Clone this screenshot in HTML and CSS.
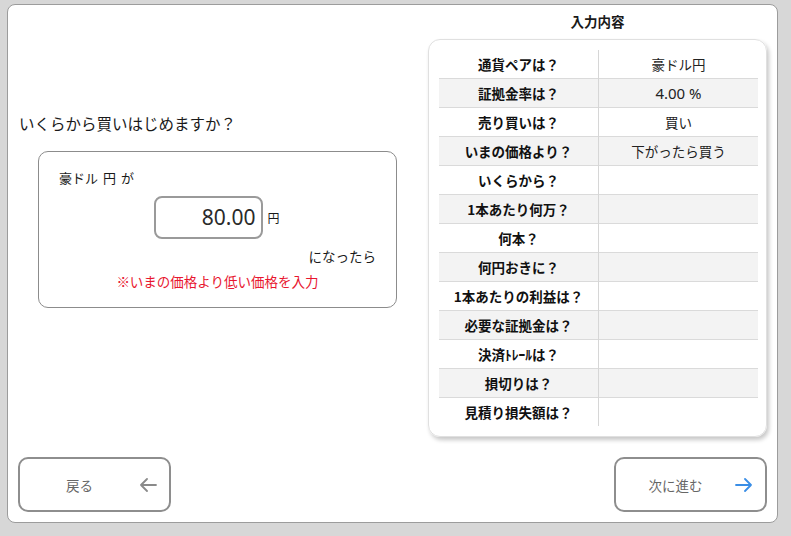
FILE: index.html
```html
<!DOCTYPE html>
<html lang="ja">
<head>
<meta charset="utf-8">
<link rel="stylesheet" href="styles.css">
</head>
<body>
<div class="panel">
  <div class="main">
    <div class="left">
      <p class="question">いくらから買いはじめますか？</p>
      <div class="entry">
        <div class="pair"><span class="w">豪ドル</span><span class="w">円</span><span>が</span></div>
        <div class="price-row">
          <div class="price-input">80.00</div>
          <span class="unit">円</span>
        </div>
        <div class="then">になったら</div>
        <div class="note">※いまの価格より低い価格を入力</div>
      </div>
    </div>
    <div class="right">
      <div class="summary-title">入力内容</div>
      <div class="card">
        <table class="summary">
          <tr><th>通貨ペアは？</th><td>豪ドル円</td></tr>
          <tr><th>証拠金率は？</th><td class="num">4.00 %</td></tr>
          <tr><th>売り買いは？</th><td>買い</td></tr>
          <tr><th>いまの価格より？</th><td>下がったら買う</td></tr>
          <tr><th>いくらから？</th><td></td></tr>
          <tr><th>1本あたり何万？</th><td></td></tr>
          <tr><th>何本？</th><td></td></tr>
          <tr><th>何円おきに？</th><td></td></tr>
          <tr><th>1本あたりの利益は？</th><td></td></tr>
          <tr><th>必要な証拠金は？</th><td></td></tr>
          <tr><th>決済ﾄﾚｰﾙは？</th><td></td></tr>
          <tr><th>損切りは？</th><td></td></tr>
          <tr><th>見積り損失額は？</th><td></td></tr>
        </table>
      </div>
    </div>
  </div>
  <div class="actions">
    <button class="nav-btn">
      <span class="label">戻る</span>
      <svg class="arrow" width="18" height="14" viewBox="0 0 18 14"><path d="M17 7H2M8 1L2 7l6 6" fill="none" stroke="#8a8a8a" stroke-width="1.8" stroke-linecap="round" stroke-linejoin="round"/></svg>
    </button>
    <button class="nav-btn">
      <span class="label">次に進む</span>
      <svg class="arrow" width="18" height="14" viewBox="0 0 18 14"><path d="M1 7h15M10 1l6 6-6 6" fill="none" stroke="#3a8ee6" stroke-width="1.8" stroke-linecap="round" stroke-linejoin="round"/></svg>
    </button>
  </div>
</div>
</body>
</html>
```
FILE: styles.css
```css
html, body {
  margin: 0;
  padding: 0;
}
body {
  background: #d7d7d7;
  width: 791px;
  height: 536px;
  font-family: "Noto Sans CJK JP", "Noto Sans", sans-serif;
  color: #1a1a1a;
  padding: 4px 0 0 7px;
  box-sizing: border-box;
}
.panel {
  width: 771px;
  height: 519px;
  box-sizing: border-box;
  background: #fff;
  border: 1px solid #9c9c9c;
  border-radius: 8px;
  display: flex;
  flex-direction: column;
}
.main {
  flex: 1;
  display: flex;
  justify-content: space-between;
}
.left {
  padding-left: 11px;
  padding-top: 108px;
}
.question {
  margin: 0;
  font-size: 15.5px;
  line-height: 20px;
  height: 20px;
}
.entry {
  margin: 18px 0 0 19px;
  width: 359px;
  height: 157px;
  box-sizing: border-box;
  border: 1px solid #8c8c8c;
  border-radius: 10px;
  padding: 16px 20px 0 20px;
}
.pair {
  font-size: 13px;
  line-height: 20px;
  height: 20px;
}
.pair .w {
  margin-right: 5px;
}
.price-row {
  margin-top: 8px;
  display: flex;
  align-items: center;
  justify-content: center;
  gap: 5px;
}
.price-input {
  width: 109px;
  height: 43px;
  box-sizing: border-box;
  border: 2px solid #9a9a9a;
  border-radius: 8px;
  font-family: "Noto Sans", sans-serif;
  font-size: 21px;
  line-height: 39px;
  text-align: right;
  padding-right: 5px;
  color: #2a2a2a;
}
.unit {
  font-size: 12px;
  width: 14px;
}
.then {
  margin-top: 7px;
  text-align: right;
  font-size: 13.5px;
  line-height: 20px;
  height: 20px;
}
.note {
  margin-top: 5px;
  text-align: center;
  color: #e8162f;
  font-size: 13.5px;
  line-height: 20px;
  height: 20px;
}
.right {
  width: 339px;
  margin-right: 10px;
  padding-top: 6px;
}
.summary-title {
  text-align: center;
  font-weight: bold;
  font-size: 13.5px;
  line-height: 20px;
  height: 20px;
}
.card {
  margin-top: 8px;
  box-sizing: border-box;
  border: 1px solid #e0e0e0;
  border-radius: 12px;
  box-shadow: 2px 3px 4px rgba(0, 0, 0, 0.22);
  padding: 10px 9px 10px 10px;
}
.summary {
  width: 318px;
  border-collapse: collapse;
  table-layout: fixed;
}
.summary tr {
  border-bottom: 1px solid #dadada;
}
.summary tr:last-child {
  border-bottom: none;
}
.summary tr:nth-child(even) {
  background: #f3f3f3;
}
.summary th,
.summary td {
  height: 28px;
  padding: 0;
  text-align: center;
  font-size: 13.5px;
  line-height: 18px;
  width: 159px;
}
.summary th {
  font-weight: bold;
  color: #111;
}
.summary td {
  border-left: 1px solid #d6d6d6;
  color: #222;
}
.summary td.num {
  font-family: "Noto Sans", sans-serif;
  font-size: 15px;
}
.actions {
  display: flex;
  justify-content: space-between;
  padding: 0 10px 10px 10px;
}
.nav-btn {
  width: 153px;
  height: 55px;
  box-sizing: border-box;
  border: 2px solid #8e8e8e;
  border-radius: 10px;
  background: #fff;
  display: flex;
  align-items: center;
  padding: 0 12px 0 0;
  font-family: "Noto Sans CJK JP", "Noto Sans", sans-serif;
  cursor: pointer;
}
.nav-btn .label {
  flex: 1;
  text-align: center;
  font-size: 13.5px;
  color: #666;
}
.nav-btn .arrow {
  display: block;
}
```
